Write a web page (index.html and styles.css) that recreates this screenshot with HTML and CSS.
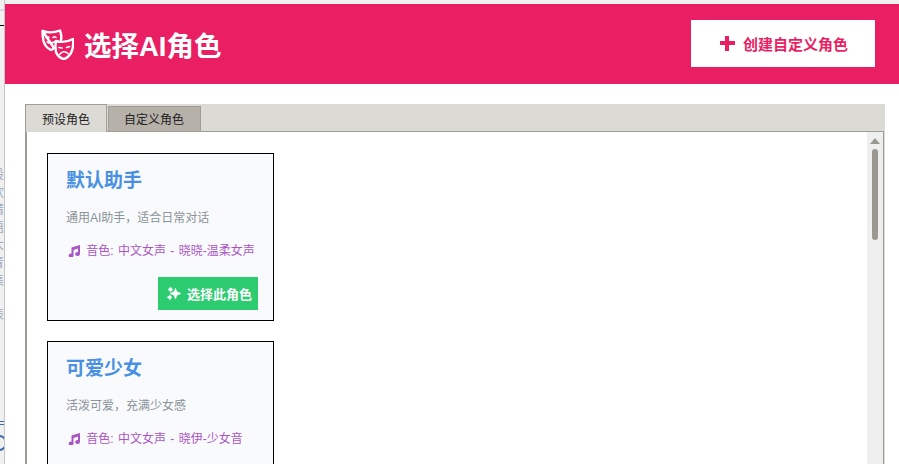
FILE: index.html
```html
<!DOCTYPE html>
<html lang="zh-CN">
<head>
    <meta charset="UTF-8">
    <title>选择AI角色</title>
    <link rel="stylesheet" href="styles.css">
</head>
<body>
    <div class="side-strip">
        <div class="smudge"></div>
        <div class="black-line"></div>
        <div class="behind-text">
            <span>设</span><span>欢</span><span>请</span><span>语</span><span>大</span><span>青</span><span>集</span>
            <span class="gap">表</span>
        </div>
        <div class="blue-lines"></div>
        <div class="blue-ring"></div>
    </div>
    <div class="dialog">
        <div class="header">
            <h1>
                <svg class="mask-icon" viewBox="0 0 33 31" width="33" height="31" fill="none" stroke="#fff" stroke-width="2.400" stroke-linejoin="round" stroke-linecap="round">
                    <path d="M1.500 2Q10 5 19 1.500Q21 7 20 11M13 19Q11 21 10 21Q4 18 2.500 12Q1.500 7 1.500 2z"/>
                    <path stroke-width="1.600" d="M5 8.500Q6.500 7 8 8.500M12 8.500Q13.500 7 15 8.500M6 13Q10 15.500 14 12.500"/>
                    <path d="M15 12Q24 14.500 32 10Q33 18 30 24Q26 30 22.500 30Q17 28.500 15 23Q14 17 15 12z"/>
                    <path stroke-width="1.600" d="M18 18.500L21 19M25.500 18.500L28.500 17.500M18.500 25.500Q22.500 20.500 27 24.500"/>
                </svg>
                选择AI角色
            </h1>
            <button class="create-btn"><span class="plus"></span>创建自定义角色</button>
        </div>

        <div class="tabs">
            <div class="tab-bar">
                <div class="tab active">预设角色</div>
                <div class="tab">自定义角色</div>
            </div>
            <div class="tab-panel">
                <div class="role-list">
                    <div class="role-card">
                        <h3>默认助手</h3>
                        <p class="desc">通用AI助手，适合日常对话</p>
                        <p class="voice">
                            <svg class="note" viewBox="0 0 12 12" width="12" height="12"><path fill="#a956c4" d="M3.500 2.500 12 0v9a2.400 2 0 1 1-2-2V3.600L5.500 4.900V10.500a2.400 2 0 1 1-2-2z"/></svg>
                            音色: 中文女声 - 晓晓-温柔女声
                        </p>
                        <div class="card-foot">
                            <button class="select-btn">
                                <svg viewBox="0 0 14 13" width="14" height="13"><path fill="#fff" stroke="#fff" stroke-width=".7" d="M8.500 1.500l1.200 3.300L14 6.500l-4.300 1.700L8.500 12 7.200 8.200 3 6.500l4.200-1.700zM3.500 0l.9 1.600L6 2.500l-1.600.9L3.500 5 2.600 3.400 1 2.500l1.600-.9zM2.800 8l.8 1.500 1.400.8-1.400.8L2.800 13 2 11.100l-2-.8 2-.8z"/></svg>
                                选择此角色
                            </button>
                        </div>
                    </div>
                    <div class="role-card">
                        <h3>可爱少女</h3>
                        <p class="desc">活泼可爱，充满少女感</p>
                        <p class="voice">
                            <svg class="note" viewBox="0 0 12 12" width="12" height="12"><path fill="#a956c4" d="M3.500 2.500 12 0v9a2.400 2 0 1 1-2-2V3.600L5.500 4.900V10.500a2.400 2 0 1 1-2-2z"/></svg>
                            音色: 中文女声 - 晓伊-少女音
                        </p>
                        <div class="card-foot">
                            <button class="select-btn">
                                <svg viewBox="0 0 14 13" width="14" height="13"><path fill="#fff" stroke="#fff" stroke-width=".7" d="M8.500 1.500l1.200 3.300L14 6.500l-4.300 1.700L8.500 12 7.200 8.200 3 6.500l4.200-1.700zM3.500 0l.9 1.600L6 2.500l-1.600.9L3.500 5 2.600 3.400 1 2.500l1.600-.9zM2.800 8l.8 1.500 1.400.8-1.400.8L2.800 13 2 11.100l-2-.8 2-.8z"/></svg>
                                选择此角色
                            </button>
                        </div>
                    </div>
                </div>
                <div class="scrollbar">
                    <div class="arrow"></div>
                    <div class="thumb"></div>
                </div>
            </div>
        </div>
    </div>
</body>
</html>
```

FILE: styles.css
```css
html, body {
    margin: 0;
    height: 100%;
    overflow: hidden;
}
body {
    display: flex;
    font-family: "Liberation Sans", "Noto Sans CJK SC", sans-serif;
    background: #fff;
    color: #333;
}
.side-strip {
    width: 4px;
    flex: none;
    overflow: hidden;
    background: #f0f0f0;
    border-right: 1px solid #c4c4c4;
}
.smudge {
    height: 2px;
    margin-top: 9px;
    background: #d6d6ea;
}
.black-line {
    height: 1px;
    margin-top: 14px;
    background: #000;
}
.behind-text {
    width: 12px;
    margin: 141px 0 0 -8px;
    color: #a0a8b8;
    font-size: 12px;
    line-height: 17.600px;
}
.behind-text span {
    display: block;
}
.behind-text .gap {
    margin-top: 17px;
}
.blue-lines {
    height: 2px;
    margin-top: 96px;
    border-top: 1px solid #3b6cb0;
    border-bottom: 1px solid #3b6cb0;
}
.blue-ring {
    width: 12px;
    height: 12px;
    margin: 10px 0 0 -9px;
    border: 2px solid #3b6cb0;
    border-radius: 50%;
}
.dialog {
    flex: 1;
    min-width: 0;
    border-top: 4px solid #f0f0f0;
}
.header {
    display: flex;
    align-items: center;
    justify-content: space-between;
    height: 80px;
    padding: 0 24px 2px 36px;
    box-sizing: border-box;
    background: #e91e63;
    color: #fff;
}
.header h1 {
    display: flex;
    align-items: center;
    gap: 10px;
    margin: 2px 0 0;
    font-size: 27.500px;
    font-weight: 700;
}
.create-btn {
    display: flex;
    align-items: center;
    justify-content: center;
    gap: 8px;
    width: 184px;
    height: 47px;
    padding: 0 0 0 2px;
    border: 0;
    background: #fff;
    color: #e91e63;
    font: 700 15px "Liberation Sans", "Noto Sans CJK SC", sans-serif;
}
.plus {
    width: 15px;
    height: 15px;
    background:
        linear-gradient(#e91e63, #e91e63) center / 15px 4px no-repeat,
        linear-gradient(#e91e63, #e91e63) center / 4px 15px no-repeat;
}
.tabs {
    margin: 20px 14px 0 20px;
    background: #dbdad5;
}
.tab-bar {
    display: flex;
    height: 27px;
    align-items: flex-end;
}
.tab {
    height: 24px;
    padding: 0 16px 0 15px;
    margin-left: 1px;
    border: 1px solid #a09c96;
    border-bottom: 0;
    background: #b6b1a9;
    font-size: 12px;
    line-height: 26px;
    color: #222;
}
.tab.active {
    height: 27px;
    margin-left: 0;
    padding: 0 16px;
    background: #dbdad5;
    line-height: 30px;
    position: relative;
    top: 1px;
}
.tab-panel {
    display: flex;
    height: 340px;
    margin-right: 1px;
    border: 1px solid #a09c96;
    border-left-width: 2px;
    background: #fff;
    overflow: hidden;
}
.role-list {
    flex: 1;
    padding: 21px 20px;
}
.role-card {
    width: 192px;
    height: 136px;
    padding: 16px 15px 14px 18px;
    margin-bottom: 20px;
    border: 1px solid #000;
    background: #f9fafc;
}
.role-card h3 {
    margin: 0;
    font-size: 19px;
    line-height: 22px;
    font-weight: 700;
    color: #4a90e2;
}
.desc {
    margin: 18px 0 0;
    font-size: 12px;
    line-height: 17px;
    color: #8a9499;
}
.voice {
    margin: 16px 0 0;
    font-size: 12px;
    line-height: 17px;
    color: #a956c4;
    word-spacing: 1px;
}
.note {
    margin: 0 2px;
    vertical-align: -2px;
}
.card-foot {
    display: flex;
    justify-content: flex-end;
    margin-top: 17px;
}
.select-btn {
    display: flex;
    align-items: center;
    justify-content: center;
    gap: 6px;
    width: 100px;
    height: 33px;
    padding: 0 0 0 3px;
    border: 0;
    background: #2ecc71;
    color: #fff;
    font: 700 13px "Liberation Sans", "Noto Sans CJK SC", sans-serif;
}
.scrollbar {
    width: 16px;
    flex: none;
    background: #efefef;
    padding-top: 6px;
    box-sizing: border-box;
}
.arrow {
    width: 0;
    margin: 0 auto;
    border: 5px solid transparent;
    border-top: 0;
    border-bottom: 6px solid #9a9891;
}
.thumb {
    width: 6px;
    height: 91px;
    margin: 5px auto 0;
    border-radius: 3px;
    background: #9a9891;
}
```
